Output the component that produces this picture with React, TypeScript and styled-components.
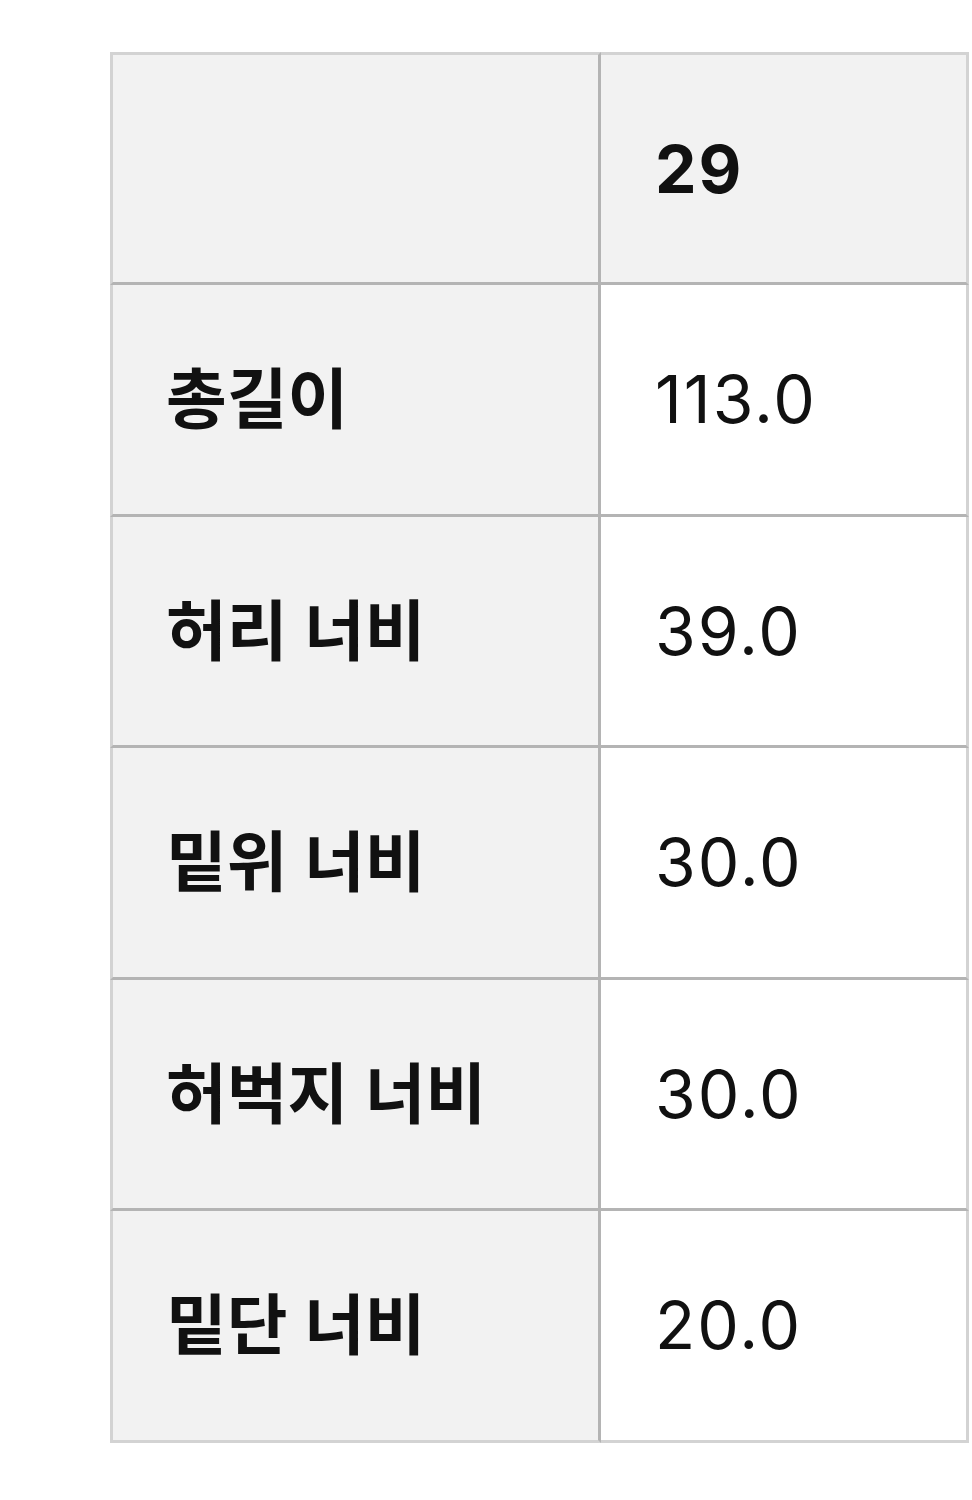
import React from 'react';
import styled, {createGlobalStyle} from 'styled-components';

const GlobalStyle = createGlobalStyle`
  html, body {
    margin: 0;
    padding: 0;
    background: #ffffff;
  }
  body {
    font-family: Inter, "Noto Sans CJK KR", sans-serif;
    color: #111111;
  }
`;

type SizeRow = {
  label: string;
  value: string;
};

const rows: SizeRow[] = [
  {label: '총길이', value: '113.0'},
  {label: '허리 너비', value: '39.0'},
  {label: '밑위 너비', value: '30.0'},
  {label: '허벅지 너비', value: '30.0'},
  {label: '밑단 너비', value: '20.0'},
];

const OUTER = '#d3d3d3';
const INNER = '#b4b4b4';

const Page = styled.div`
  padding: 52px 0 0 110px;
`;

const Table = styled.table`
  width: 859px;
  border-collapse: separate;
  border-spacing: 0;
  table-layout: fixed;
`;

const Cell = styled.td<{$head?: boolean; $first?: boolean; $top?: boolean; $last?: boolean}>`
  height: ${({$top}) => ($top ? 233 : 231.5)}px;
  padding: 0 0 0 ${({$first}) => ($first ? 53 : 54)}px;
  box-sizing: border-box;
  background: ${({$head, $first}) => ($head || $first ? '#f2f2f2' : '#ffffff')};
  border-top: ${({$top}) => ($top ? `3px solid ${OUTER}` : 'none')};
  border-bottom: 3px solid ${({$last}) => ($last ? OUTER : INNER)};
  border-left: ${({$first}) => ($first ? `3px solid ${OUTER}` : 'none')};
  border-right: 3px solid ${({$first}) => ($first ? INNER : OUTER)};
  font-family: Inter, "Noto Sans CJK KR", sans-serif;
  font-size: 66px;
  font-weight: ${({$head, $first}) => ($head ? 700 : $first ? 600 : 400)};
  letter-spacing: ${({$first}) => ($first ? '0' : '2px')};
  line-height: 1;
  white-space: nowrap;
  vertical-align: middle;
  color: #111111;
`;

const LabelCol = styled.col`
  width: 491px;
`;

export default function App() {
  return (
    <>
      <GlobalStyle />
      <Page>
        <Table>
          <colgroup>
            <LabelCol />
            <col />
          </colgroup>
          <tbody>
            <tr>
              <Cell $head $first $top />
              <Cell $head $top>
                29
              </Cell>
            </tr>
            {rows.map((row, index) => (
              <tr key={row.label}>
                <Cell $first $last={index === rows.length - 1}>
                  {row.label}
                </Cell>
                <Cell $last={index === rows.length - 1}>{row.value}</Cell>
              </tr>
            ))}
          </tbody>
        </Table>
      </Page>
    </>
  );
}
